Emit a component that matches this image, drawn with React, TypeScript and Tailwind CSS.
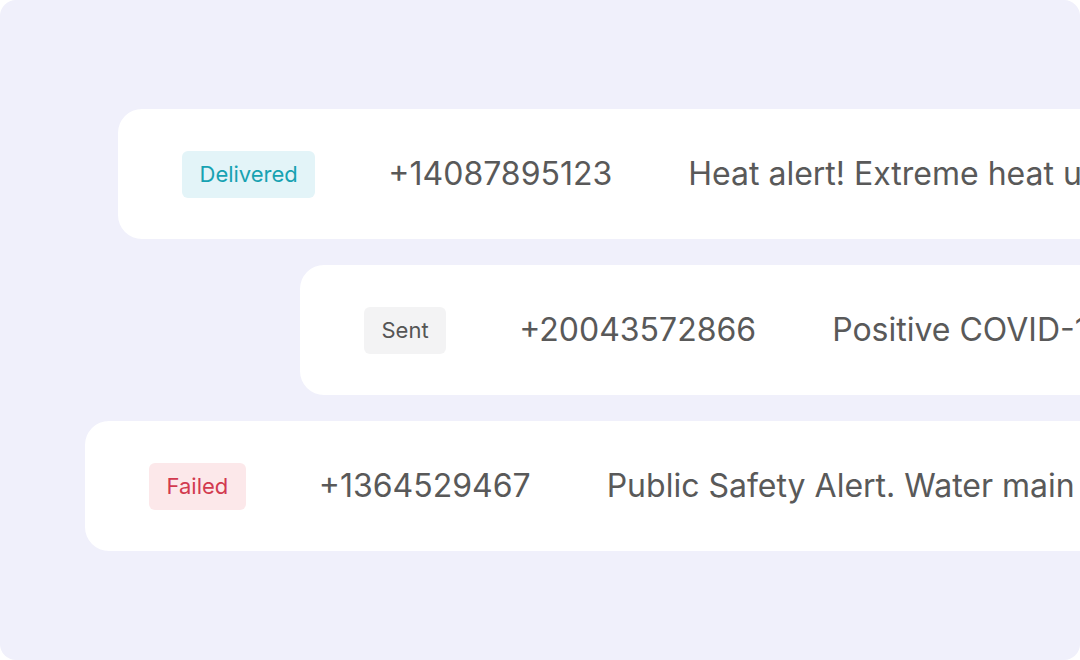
import React from 'react';

type Status = 'Delivered' | 'Sent' | 'Failed';

interface Message {
  status: Status;
  phone: string;
  text: string;
  offset: string;
}

const messages: Message[] = [
  { status: 'Delivered', phone: '+14087895123', text: 'Heat alert! Extreme heat until 9pm today', offset: 'ml-[118px]' },
  { status: 'Sent', phone: '+20043572866', text: 'Positive COVID-19 test results', offset: 'ml-[300px]' },
  { status: 'Failed', phone: '+1364529467', text: 'Public Safety Alert. Water main break', offset: 'ml-[85px]' },
];

const badgeStyles: Record<Status, string> = {
  Delivered: 'bg-[#e3f4f8] text-[#17a2b2]',
  Sent: 'bg-[#f3f3f4] text-[#555555]',
  Failed: 'bg-[#fce8ea] text-[#d23a4f]',
};

const StatusBadge: React.FC<{ status: Status }> = ({ status }) => (
  <span className={`shrink-0 h-[47px] px-[17.5px] flex items-center rounded-md text-[22px] ${badgeStyles[status]}`}>
    {status}
  </span>
);

const MessageRow: React.FC<{ msg: Message }> = ({ msg }) => (
  <div
    className={`${msg.offset} shrink-0 w-[1200px] h-[130px] bg-white rounded-3xl flex items-center pl-16 whitespace-nowrap`}
  >
    <StatusBadge status={msg.status} />
    <span className="ml-[73px] text-[32px] text-[#595959]">{msg.phone}</span>
    <span className="ml-[76px] text-[32px] text-[#595959]">{msg.text}</span>
  </div>
);

const App: React.FC = () => {
  return (
    <div className="w-[1080px] h-[660px] bg-white" style={{ fontFamily: 'Inter, "Noto Sans", sans-serif' }}>
      <div className="w-full h-full bg-[#f0f0fb] rounded-2xl overflow-hidden pt-[109px] flex flex-col gap-[26px]">
        {messages.map((m) => (
          <MessageRow key={m.phone} msg={m} />
        ))}
      </div>
    </div>
  );
};

export default App;
